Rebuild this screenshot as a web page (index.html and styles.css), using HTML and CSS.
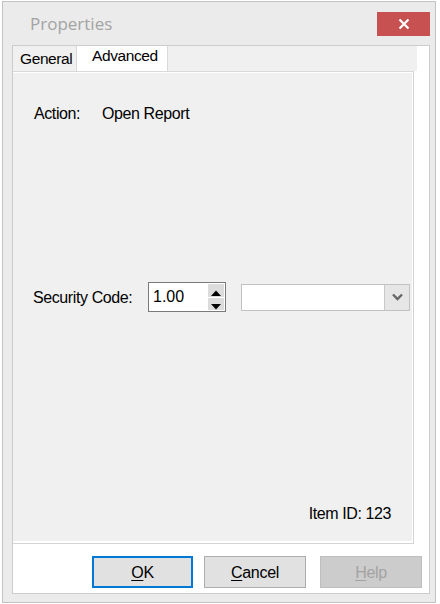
FILE: index.html
```html
<!DOCTYPE html>
<html lang="en">
<head>
<meta charset="utf-8">
<title>Properties</title>
<link rel="stylesheet" href="styles.css">
</head>
<body>
<div class="window">
  <div class="titlebar">
    <span class="title">Properties</span>
    <button class="close" aria-label="Close">
      <svg width="12" height="12" viewBox="0 0 12 12"><path d="M1.5 1.5 L10.5 10.5 M10.5 1.5 L1.5 10.5" stroke="#fff" stroke-width="2.2" fill="none"/></svg>
    </button>
  </div>
  <div class="panel">
    <div class="tabs">
      <div class="tab">General</div>
      <div class="tab active">Advanced</div>
    </div>
    <div class="page">
      <div class="row action-row">
        <span class="label label-action">Action:</span>
        <span class="value">Open Report</span>
      </div>
      <div class="row security-row">
        <span class="label label-security">Security Code:</span>
        <div class="spin">
          <span class="spin-value">1.00</span>
          <div class="spin-buttons">
            <div class="spin-btn up"><svg width="10" height="6" viewBox="0 0 10 6"><path d="M0 6 L5 0.5 L10 6 Z" fill="#000"/></svg></div>
            <div class="spin-btn down"><svg width="10" height="6" viewBox="0 0 10 6"><path d="M0 0 L5 5.5 L10 0 Z" fill="#000"/></svg></div>
          </div>
        </div>
        <div class="combo">
          <div class="combo-field"></div>
          <div class="combo-btn"><svg width="11" height="8" viewBox="0 0 11 8"><path d="M1 1.5 L5.5 6 L10 1.5" stroke="#666" stroke-width="2.4" fill="none"/></svg></div>
        </div>
      </div>
      <div class="row item-row">Item ID: 123</div>
    </div>
    <div class="buttons">
      <button class="btn default"><u>O</u>K</button>
      <button class="btn cancel"><u>C</u>ancel</button>
      <button class="btn help" disabled><u>H</u>elp</button>
    </div>
  </div>
</div>
</body>
</html>
```
FILE: styles.css
```css
html, body {
  margin: 0;
  padding: 0;
  background: #ffffff;
}

body {
  font-family: "Liberation Sans", Arial, sans-serif;
  font-size: 16px;
  letter-spacing: -0.4px;
  color: #000;
}

.window {
  margin: 1px 0 0 2px;
  width: 434px;
  height: 602px;
  box-sizing: border-box;
  border: 1px solid #c2c2c2;
  background: #ebebeb;
  display: flex;
  flex-direction: column;
  padding: 0 0 8px 9px;
}

.titlebar {
  height: 43px;
  flex: none;
  display: flex;
  align-items: flex-start;
}

.title {
  margin-top: 11px;
  margin-left: 18px;
  font-family: "Open Sans", "Liberation Sans", sans-serif;
  font-size: 17px;
  line-height: 21px;
  letter-spacing: 0;
  color: #a3a3a3;
}

.close {
  margin-left: auto;
  margin-top: 10px;
  margin-right: 5px;
  width: 53px;
  height: 24px;
  padding: 0;
  border: none;
  background: #c75050;
  display: flex;
  align-items: center;
  justify-content: center;
}

.panel {
  width: 418px;
  flex: 1;
  box-sizing: border-box;
  border: 1px solid #cccccc;
  background: #ffffff;
  display: flex;
  flex-direction: column;
}

.tabs {
  width: 404px;
  height: 25px;
  flex: none;
  background: #f0f0f0;
  display: flex;
}

.tab {
  box-sizing: border-box;
  width: 64px;
  height: 25px;
  padding: 1px 0 0 7px;
  border-right: 1px solid #d9d9d9;
  display: flex;
  align-items: center;
  font-size: 15.5px;
}

.tab.active {
  width: 91px;
  padding: 0 0 5px 15px;
  background: #ffffff;
}

.page {
  width: 401px;
  height: 473px;
  flex: none;
  box-sizing: border-box;
  border-top: 1px solid #d9d9d9;
  border-right: 1px solid #d4d4d4;
  border-bottom: 1px solid #d4d4d4;
  box-shadow: inset 0 1px 0 #ffffff, inset -1px 0 0 #ffffff, inset 0 -2px 0 #ffffff;
  background: #f0f0f0;
  display: flex;
  flex-direction: column;
  padding: 0 0 20px 20px;
}

.row {
  display: flex;
  align-items: center;
}

.row > * {
  flex: none;
}

.action-row {
  margin-top: 33px;
  height: 18px;
  line-height: 18px;
  padding-left: 1px;
}

.label-action {
  width: 68px;
}

.security-row {
  margin-top: 159px;
  height: 30px;
}

.label-security {
  width: 115px;
  padding-top: 1px;
}

.spin {
  width: 78px;
  height: 30px;
  box-sizing: border-box;
  border: 1px solid #7a7a7a;
  background: #ffffff;
  display: flex;
  align-items: center;
}

.spin-value {
  flex: 1;
  padding-left: 4px;
  font-size: 16px;
  letter-spacing: 0;
}

.spin-buttons {
  width: 16px;
  margin-right: 1px;
  display: flex;
  flex-direction: column;
  gap: 1px;
}

.spin-btn {
  height: 12px;
  background: #dcdcdc;
  display: flex;
  justify-content: center;
}

.spin-btn.up {
  align-items: flex-end;
  padding-bottom: 1px;
}

.spin-btn.down {
  align-items: flex-end;
}

.combo {
  margin-left: 15px;
  width: 169px;
  height: 27px;
  box-sizing: border-box;
  border: 1px solid #c2c2c2;
  background: #ffffff;
  display: flex;
}

.combo-field {
  flex: 1;
}

.combo-btn {
  width: 24px;
  border-left: 1px solid #c8c8c8;
  background: #e6e6e6;
  display: flex;
  align-items: center;
  justify-content: center;
}

.item-row {
  margin-top: auto;
  padding-right: 22px;
  justify-content: flex-end;
  height: 18px;
  line-height: 18px;
}

.buttons {
  margin-top: 12px;
  display: flex;
}

.btn {
  height: 32px;
  box-sizing: border-box;
  padding: 1px 0 0;
  font-family: "Liberation Sans", Arial, sans-serif;
  font-size: 16px;
  letter-spacing: -0.3px;
  color: #000;
  background: #e1e1e1;
  border: 1px solid #adadad;
}

.btn u {
  text-underline-offset: 2px;
}

.default {
  margin-left: 79px;
  width: 101px;
  border: 2px solid #0078d7;
}

.cancel {
  margin-left: 11px;
  width: 102px;
}

.help {
  margin-left: 14px;
  width: 102px;
  background: #cccccc;
  border-color: #bfbfbf;
  color: #a3a3a3;
}
```
